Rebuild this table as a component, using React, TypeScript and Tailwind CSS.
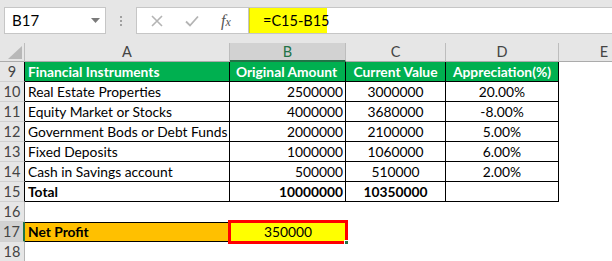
import React from "react";

const FONT = { fontFamily: "Lato, 'Liberation Sans', sans-serif" };

type Row = { n: number; a: string; b: string; c: string; d: string; kind: "head" | "data" | "total" };

const rows: Row[] = [
  { n: 9, a: "Financial Instruments", b: "Original Amount", c: "Current Value", d: "Appreciation(%)", kind: "head" },
  { n: 10, a: "Real Estate Properties", b: "2500000", c: "3000000", d: "20.00%", kind: "data" },
  { n: 11, a: "Equity Market or Stocks", b: "4000000", c: "3680000", d: "-8.00%", kind: "data" },
  { n: 12, a: "Government Bods or Debt Funds", b: "2000000", c: "2100000", d: "5.00%", kind: "data" },
  { n: 13, a: "Fixed Deposits", b: "1000000", c: "1060000", d: "6.00%", kind: "data" },
  { n: 14, a: "Cash in Savings account", b: "500000", c: "510000", d: "2.00%", kind: "data" },
  { n: 15, a: "Total", b: "10000000", c: "10350000", d: "", kind: "total" },
];

function RowHead({ n, right, selected }: { n: number; right: string; selected?: boolean }) {
  return (
    <div
      className={`w-[25px] shrink-0 h-full flex items-center justify-center pt-[1px] text-[14.5px] text-[#444] border-b border-b-[#d0d0d0] ${right} ${
        selected ? "bg-[#d2d2d2]" : "bg-[#e6e6e6]"
      }`}
    >
      {n}
    </div>
  );
}

export default function App() {
  return (
    <div className="w-[612px] h-[261px] overflow-hidden bg-white text-black whitespace-nowrap" style={FONT}>
      {/* Formula bar */}
      <div className="h-[43px] bg-[#e6e6e6] flex items-start pt-[7px] pl-[4px]">
        <div className="w-[102px] h-[27px] bg-white border border-[#c6c6c6] flex items-center pl-[7px] pr-[5px]">
          <span className="text-[15px] flex-1">B17</span>
          <svg width="9" height="5" viewBox="0 0 9 5">
            <path d="M0 0 L9 0 L4.5 5 Z" fill="#7a7a7a" />
          </svg>
        </div>
        <div className="w-[30px] h-[27px] flex flex-col items-center justify-center gap-[2px]">
          <div className="w-[2px] h-[2px] bg-[#a0a0a0]" />
          <div className="w-[2px] h-[2px] bg-[#a0a0a0]" />
          <div className="w-[2px] h-[2px] bg-[#a0a0a0]" />
        </div>
        <div className="w-[112px] h-[27px] bg-white border border-[#c6c6c6] border-r-0 flex items-center">
          <svg width="12" height="12" viewBox="0 0 12 12" className="ml-[14px]">
            <path d="M1 1 L11 11 M11 1 L1 11" stroke="#b4b4b4" strokeWidth="1.6" />
          </svg>
          <svg width="14" height="12" viewBox="0 0 14 12" className="ml-[22px]">
            <path d="M1 6.5 L5 10.5 L13 1.5" stroke="#b4b4b4" strokeWidth="1.8" fill="none" />
          </svg>
          <span
            className="ml-[22px] text-[16px] italic text-[#555]"
            style={{ fontFamily: "'Liberation Serif', serif" }}
          >
            f<span className="text-[12px]">x</span>
          </span>
        </div>
        <div className="flex-1 h-[27px] bg-white border border-[#c6c6c6] border-r-0 flex">
          <div className="w-[78px] h-full bg-[#ffff00] border-l border-[#d8d800] flex items-center pl-[13px] text-[14.5px]">
            =C15-B15
          </div>
        </div>
      </div>

      {/* Column headers */}
      <div className="h-[19px] flex bg-[#e6e6e6] text-[14.5px] text-[#444]">
        <div className="w-[25px] shrink-0 h-full relative border-r border-[#bdbdbd] border-b border-b-[#ababab]">
          <svg width="14" height="13" viewBox="0 0 14 13" className="absolute right-[2px] bottom-[2px]">
            <path d="M0 13 L14 13 L14 0 Z" fill="#b8b8b8" />
          </svg>
        </div>
        <div className="w-[205px] shrink-0 h-full flex items-center justify-center border-r border-[#bdbdbd] border-b border-b-[#ababab]">
          A
        </div>
        <div className="w-[116px] shrink-0 h-full flex items-center justify-center bg-[#d2d2d2] text-[#217346] border-r border-[#bdbdbd] border-b-2 border-b-[#217346]">
          B
        </div>
        <div className="w-[100px] shrink-0 h-full flex items-center justify-center border-r border-[#bdbdbd] border-b border-b-[#ababab]">
          C
        </div>
        <div className="w-[113px] shrink-0 h-full flex items-center justify-center border-r border-[#bdbdbd] border-b border-b-[#ababab]">
          D
        </div>
        <div className="w-[90px] shrink-0 h-full flex items-center justify-center border-b border-b-[#ababab]">
          E
        </div>
      </div>

      {/* Table rows */}
      {rows.map((r) => {
        const head = r.kind === "head";
        const bold = r.kind !== "data";
        const cellBase = `h-full shrink-0 border-r border-b border-black flex items-center pt-[1px] ${
          head ? "bg-[#00b050] text-white" : ""
        } ${bold ? "font-bold" : ""}`;
        return (
          <div key={r.n} className="h-[20px] flex text-[13.8px]">
            <RowHead n={r.n} right="border-r border-r-black" />
            <div className={`w-[205px] pl-[3px] ${cellBase}`}>{r.a}</div>
            <div className={`w-[116px] pr-[2px] ${head ? "justify-center" : "justify-end"} ${cellBase}`}>{r.b}</div>
            <div className={`w-[100px] justify-center ${cellBase}`}>{r.c}</div>
            <div className={`w-[113px] justify-center ${cellBase}`}>{r.d}</div>
          </div>
        );
      })}

      {/* Row 16 */}
      <div className="h-[20px] flex">
        <RowHead n={16} right="border-r border-r-[#b4b4b4]" />
      </div>

      {/* Row 17 */}
      <div className="h-[20px] flex text-[13.8px]">
        <RowHead n={17} right="border-r-2 border-r-[#217346]" selected />
        <div className="w-[205px] shrink-0 h-full bg-[#ffc000] border-y border-black font-bold flex items-center pl-[3px] pt-[1px]">
          Net Profit
        </div>
        <div className="w-[116px] shrink-0 h-full relative bg-[#ffff00] flex items-center justify-center pt-[1px]">
          350000
          <div className="absolute -left-[2px] -top-[2px] -right-[2px] -bottom-[2px] border-[3px] border-[#ff0000]" />
          <div className="absolute -right-[3px] -bottom-[3px] w-[5px] h-[5px] bg-[#217346] border border-white" />
        </div>
      </div>

      {/* Row 18 */}
      <div className="h-[20px] flex">
        <RowHead n={18} right="border-r border-r-[#b4b4b4]" />
      </div>
    </div>
  );
}
